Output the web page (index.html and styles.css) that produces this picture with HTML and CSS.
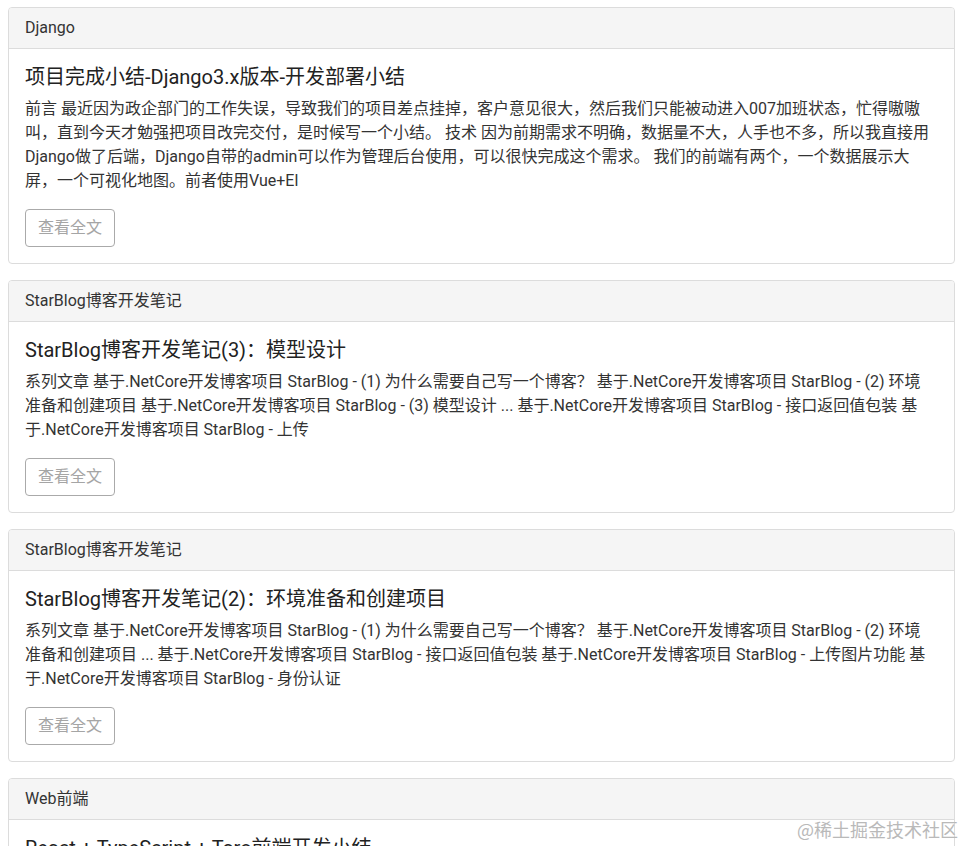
FILE: index.html
```html
<!DOCTYPE html>
<html lang="zh-CN">
<head>
<meta charset="utf-8">
<title>文章列表</title>
<link rel="stylesheet" href="styles.css">
</head>
<body>
<main class="list">
  <section class="card">
    <div class="card-header">Django</div>
    <div class="card-body">
      <h5 class="card-title">项目完成小结-Django3.x版本-开发部署小结</h5>
      <p class="card-text">前言 最近因为政企部门的工作失误，导致我们的项目差点挂掉，客户意见很大，然后我们只能被动进入007加班状态，忙得嗷嗷叫，直到今天才勉强把项目改完交付，是时候写一个小结。 技术 因为前期需求不明确，数据量不大，人手也不多，所以我直接用Django做了后端，Django自带的admin可以作为管理后台使用，可以很快完成这个需求。 我们的前端有两个，一个数据展示大屏，一个可视化地图。前者使用Vue+El</p>
      <a class="btn">查看全文</a>
    </div>
  </section>
  <section class="card">
    <div class="card-header">StarBlog博客开发笔记</div>
    <div class="card-body">
      <h5 class="card-title">StarBlog博客开发笔记(3)：模型设计</h5>
      <p class="card-text">系列文章 基于.NetCore开发博客项目 StarBlog - (1) 为什么需要自己写一个博客？ 基于.NetCore开发博客项目 StarBlog - (2) 环境准备和创建项目 基于.NetCore开发博客项目 StarBlog - (3) 模型设计 ... 基于.NetCore开发博客项目 StarBlog - 接口返回值包装 基于.NetCore开发博客项目 StarBlog - 上传</p>
      <a class="btn">查看全文</a>
    </div>
  </section>
  <section class="card">
    <div class="card-header">StarBlog博客开发笔记</div>
    <div class="card-body">
      <h5 class="card-title">StarBlog博客开发笔记(2)：环境准备和创建项目</h5>
      <p class="card-text">系列文章 基于.NetCore开发博客项目 StarBlog - (1) 为什么需要自己写一个博客？ 基于.NetCore开发博客项目 StarBlog - (2) 环境准备和创建项目 ... 基于.NetCore开发博客项目 StarBlog - 接口返回值包装 基于.NetCore开发博客项目 StarBlog - 上传图片功能 基于.NetCore开发博客项目 StarBlog - 身份认证</p>
      <a class="btn">查看全文</a>
    </div>
  </section>
  <section class="card">
    <div class="card-header">Web前端</div>
    <div class="card-body">
      <h5 class="card-title">React + TypeScript + Taro前端开发小结</h5>
      <p class="card-text">前言</p>
    </div>
  </section>
</main>
<div class="watermark">@稀土掘金技术社区</div>
</body>
</html>
```
FILE: styles.css
```css
html, body {
  margin: 0;
  padding: 0;
  background: #fff;
}
body {
  font-family: Roboto, "Noto Sans CJK SC", sans-serif;
  color: #333;
  font-size: 16px;
  line-height: 1.5;
  overflow: hidden;
  height: 846px;
}
.list {
  padding: 7px 8px 0 8px;
  display: flex;
  flex-direction: column;
  gap: 16px;
}
.card {
  border: 1px solid #dcdcdc;
  border-radius: 4px;
  background: #fff;
  overflow: hidden;
}
.card-header {
  background: #f5f5f5;
  border-bottom: 1px solid #dcdcdc;
  padding: 8px 16px;
  font-size: 16px;
  line-height: 24px;
  color: #333;
}
.card-body {
  padding: 16px;
}
.card-title {
  margin: 0 0 8px 0;
  font-size: 20px;
  font-weight: 400;
  line-height: 24px;
  color: #222;
}
.card-text {
  margin: 0 0 16px 0;
  padding-right: 7px;
  font-size: 16px;
  line-height: 24px;
}
.btn {
  display: inline-block;
  box-sizing: border-box;
  height: 38px;
  padding: 0 12px;
  border: 1px solid #aaa;
  border-radius: 4px;
  color: #a5a5a5;
  font-size: 16px;
  line-height: 36px;
}
.watermark {
  position: absolute;
  right: 5px;
  bottom: 6px;
  font-family: "Noto Sans CJK SC", sans-serif;
  font-size: 18px;
  line-height: 22px;
  color: #b9b9b9;
}
```
